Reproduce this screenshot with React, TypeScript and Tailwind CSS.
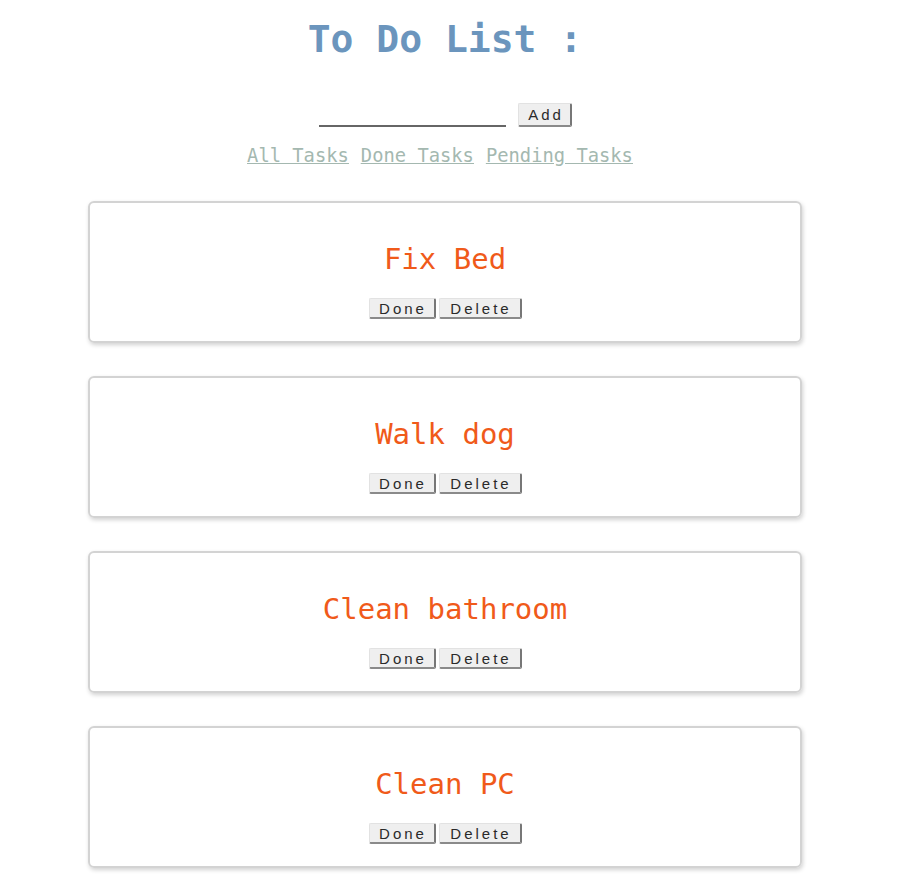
import React from 'react'

const tasks = ['Fix Bed', 'Walk dog', 'Clean bathroom', 'Clean PC']

function Btn({ label, w, h }: { label: string; w: string; h: string }) {
  return (
    <button
      className={`${w} ${h} bg-[#efefef] border-t border-l border-t-[#e2e2e2] border-l-[#e2e2e2] border-r-2 border-b-2 border-r-[#777] border-b-[#8a8a8a] rounded-[2px] text-[15px] leading-none tracking-[3px] text-[#2a2a2a] font-['Liberation_Sans',Arial,sans-serif] flex items-center justify-center pl-[3px]`}
    >
      {label}
    </button>
  )
}

export default function App() {
  return (
    <div className="w-[890px] bg-white min-h-[880px] pt-[17px] font-['DejaVu_Sans_Mono',monospace]">
      <h1 className="text-center text-[38px] leading-[44px] font-bold text-[#6b95bd]">To Do List :</h1>

      <div className="flex justify-center items-end gap-[12px] mt-[42px] pl-[1px]">
        <input className="w-[187px] h-[23px] border-b-2 border-[#666] outline-none" />
        <Btn label="Add" w="w-[54px]" h="h-[24px]" />
      </div>

      <div className="flex justify-center gap-[12px] mt-[17px] pr-[10px] text-[18.8px] leading-[24px] text-[#a4b8b0] underline">
        <a>All Tasks</a>
        <a>Done Tasks</a>
        <a>Pending Tasks</a>
      </div>

      <div className="flex flex-col gap-[33px] mt-[33px]">
        {tasks.map((t) => (
          <div
            key={t}
            className="mx-auto w-[714px] h-[142px] border-2 border-[#d3d3d3] rounded-[6px] shadow-[1px_2px_4px_rgba(0,0,0,0.18)] flex flex-col items-center pt-[38px]"
          >
            <div className="text-[29px] leading-[36px] text-[#f05a1a]">{t}</div>
            <div className="flex gap-[3px] mt-[21px]">
              <Btn label="Done" w="w-[67px]" h="h-[21px]" />
              <Btn label="Delete" w="w-[83px]" h="h-[21px]" />
            </div>
          </div>
        ))}
      </div>
    </div>
  )
}
